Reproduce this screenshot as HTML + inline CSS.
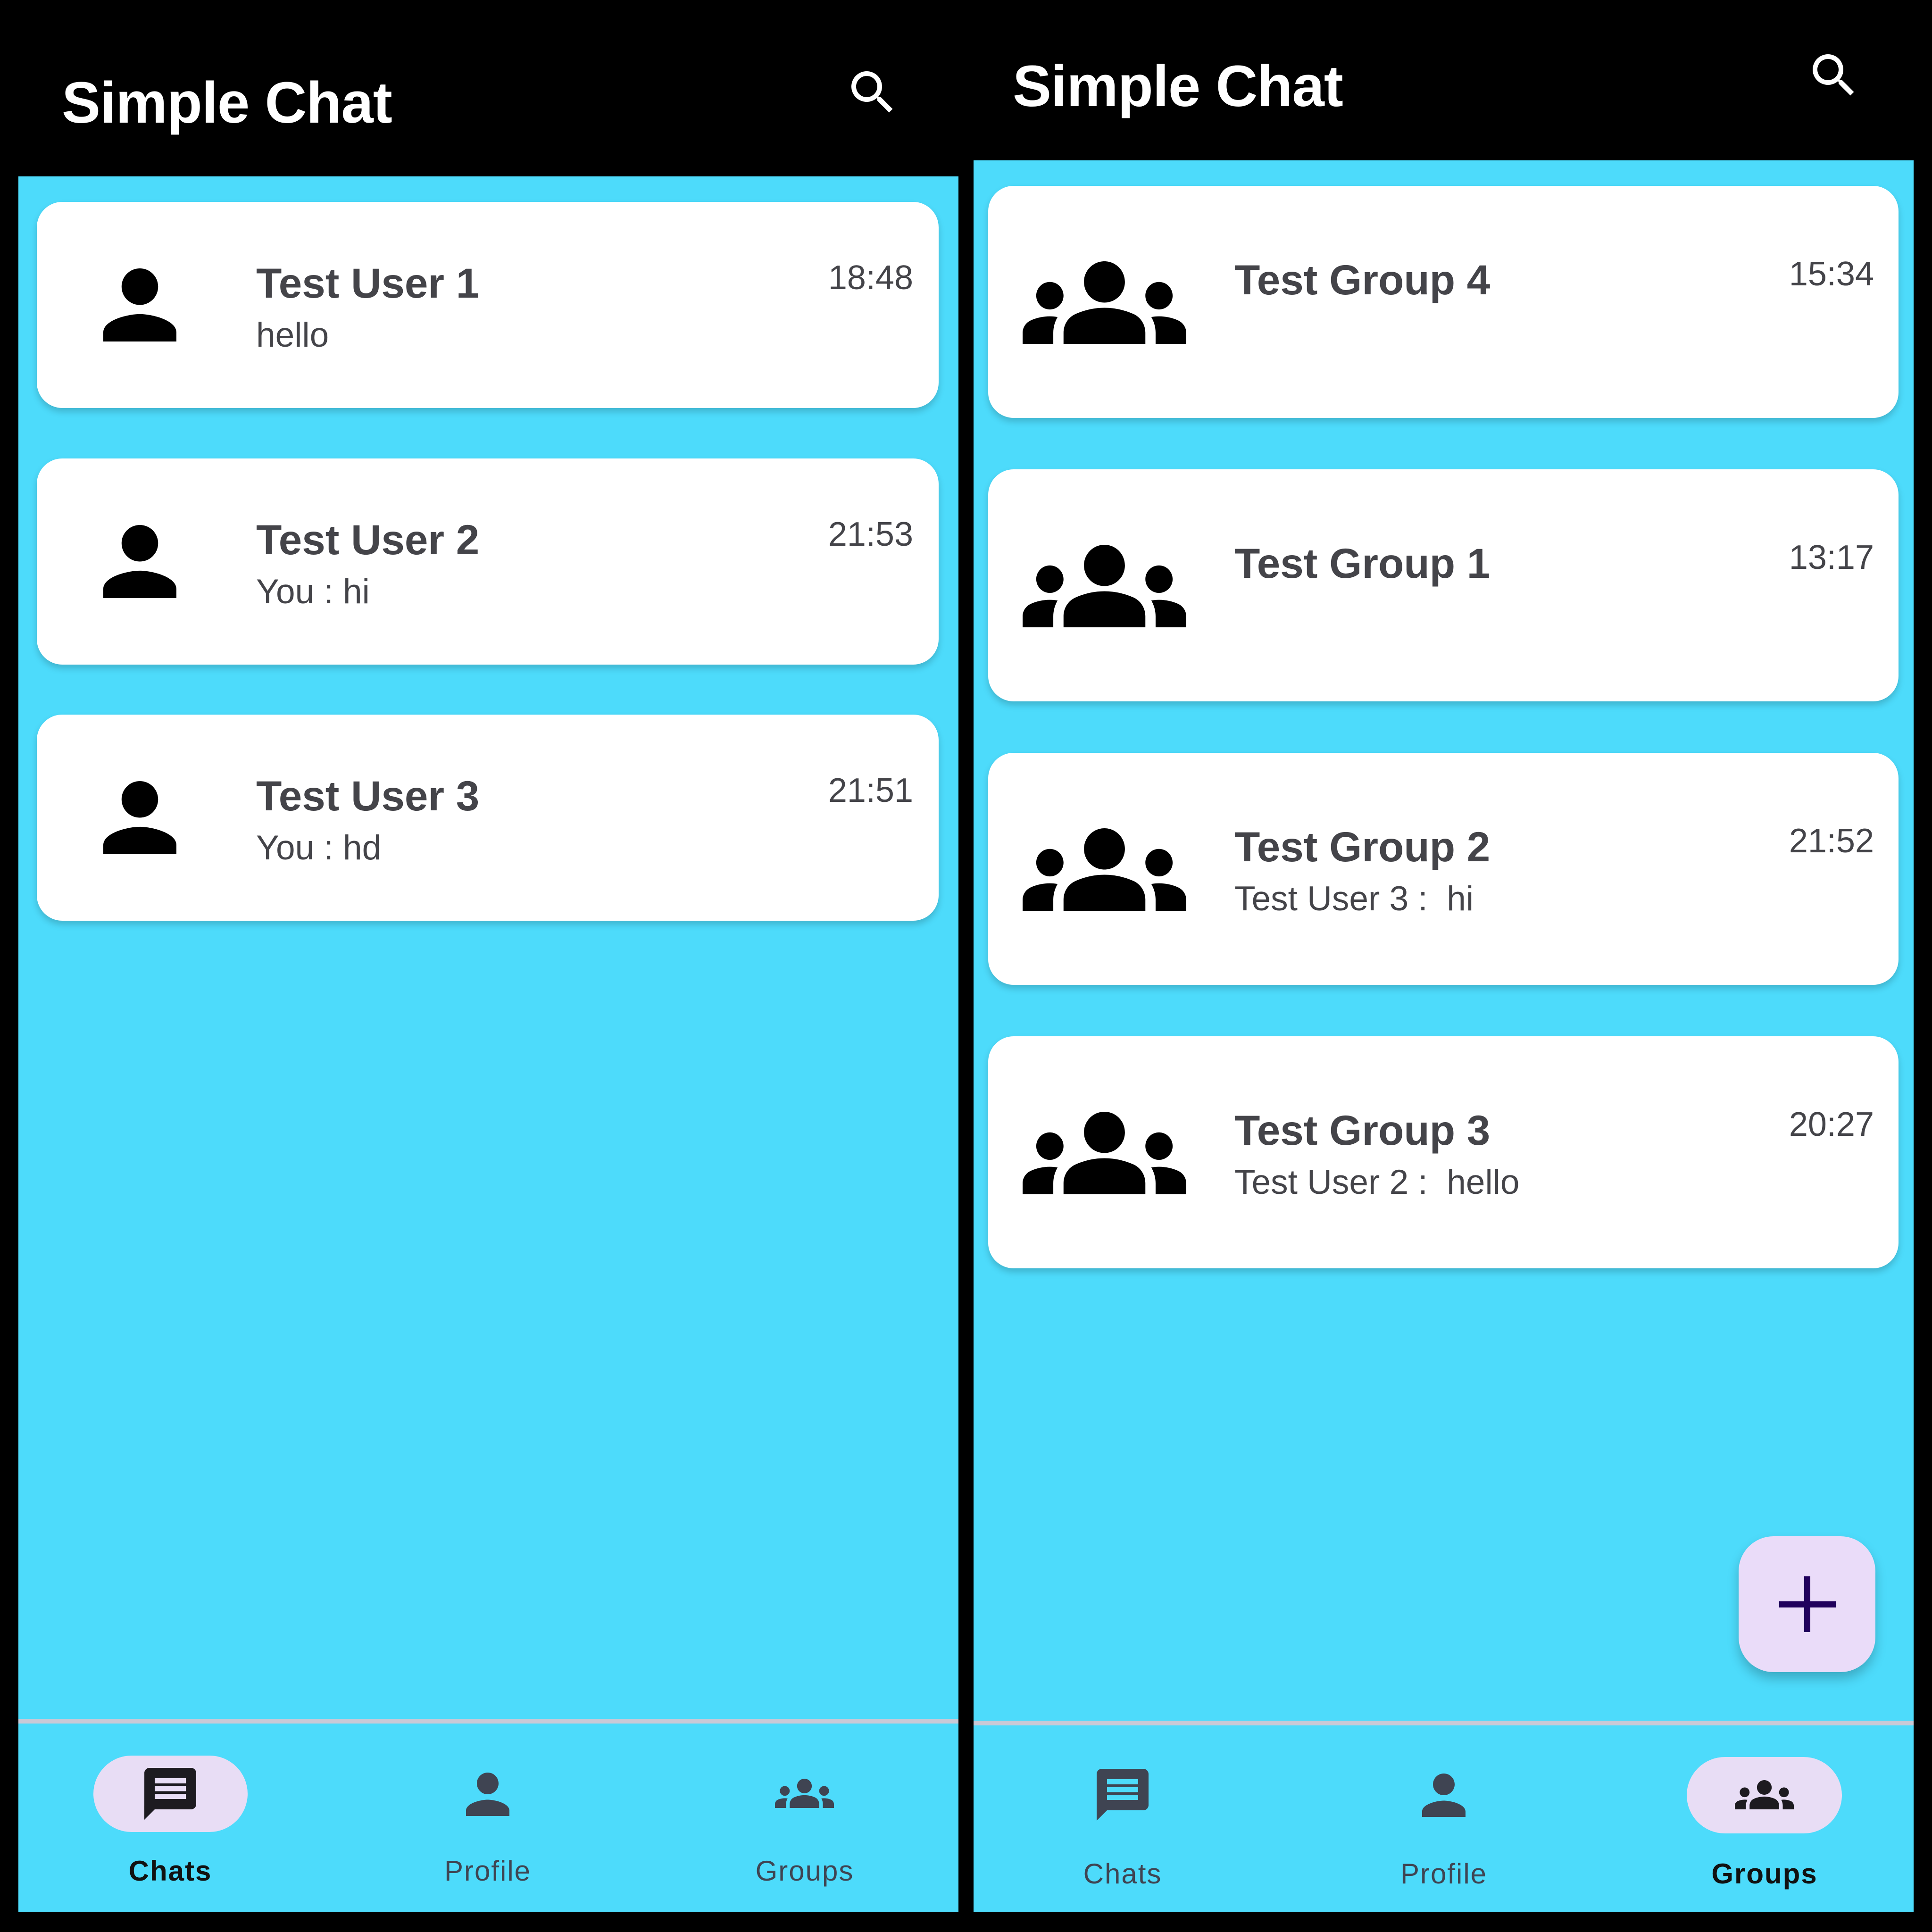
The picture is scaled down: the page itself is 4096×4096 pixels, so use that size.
<!DOCTYPE html>
<html><head><meta charset="utf-8"><style>
*{margin:0;padding:0;box-sizing:border-box}
body{width:4096px;height:4096px;background:#000;position:relative;overflow:hidden;font-family:"Liberation Sans",Roboto,sans-serif}
.a{position:absolute}
.panel{position:absolute;background:#4ddbfb}
.card{position:absolute;background:#fff;border-radius:54px;box-shadow:0 8px 14px rgba(0,0,0,.18)}
.title{position:absolute;color:#fff;font-weight:bold;font-size:123px;letter-spacing:-1px;white-space:nowrap}
.name{position:absolute;color:#444449;font-weight:bold;font-size:89px;white-space:nowrap}
.sub{position:absolute;color:#444449;font-size:73px;white-space:nowrap}
.time{position:absolute;color:#444449;font-size:72px;white-space:nowrap;text-align:right}
.lbl{position:absolute;font-size:60px;font-weight:bold;color:#3f4452;transform:translateX(-50%);letter-spacing:2px;white-space:nowrap}
.pill{position:absolute;background:#e8ddf5;border-radius:90px}
.div{position:absolute;height:10px;background:#c9c9d6}
</style></head><body>
<svg width="0" height="0" style="position:absolute"><defs>
<path id="grp" d="M12 12.75c1.63 0 3.07.39 4.24.9 1.08.48 1.76 1.56 1.760 2.73V18H6v-1.61c0-1.18.68-2.26 1.76-2.73 1.17-.52 2.61-.91 4.24-.91zM4 13c1.1 0 2-.9 2-2s-.9-2-2-2-2 .9-2 2 .9 2 2 2zm1.13 1.1c-.37-.06-.74-.1-1.13-.1-.99 0-1.93.21-2.78.58C.48 14.9 0 15.62 0 16.43V18h4.5v-1.61c0-.83.23-1.61.63-2.29zM20 13c1.1 0 2-.9 2-2s-.9-2-2-2-2 .9-2 2 .9 2 2 2zm4 3.43c0-.81-.48-1.53-1.22-1.85-.85-.37-1.79-.58-2.78-.58-.39 0-.76.04-1.13.1.4.68.63 1.46.63 2.29V18H24v-1.57zM12 6c1.66 0 3 1.34 3 3s-1.34 3-3 3-3-1.34-3-3 1.34-3 3-3z"/>
<path id="per" d="M12 12c2.21 0 4-1.79 4-4s-1.79-4-4-4-4 1.79-4 4 1.79 4 4 4zm0 2c-2.67 0-8 1.34-8 4v2h16v-2c0-2.66-5.33-4-8-4z"/>
<path id="cht" fill-rule="evenodd" d="M20 2H4c-1.1 0-1.99.9-1.99 2L2 22l4-4h14c1.1 0 2-.9 2-2V4c0-1.1-.9-2-2-2zM18 14H6v-2h12v2zM18 11H6V9h12v2zM18 8H6V6h12v2z"/>
<path id="srch" d="M15.5 14h-.79l-.28-.27A6.47 6.47 0 0 0 16 9.5 6.5 6.5 0 1 0 9.5 16c1.61 0 3.09-.59 4.23-1.57l.27.28v.79l5 4.99L20.49 19l-4.99-5zm-6 0C7.01 14 5 11.990 5 9.5S7.01 5 9.5 5 14 7.01 14 9.5 11.99 14 9.5 14z"/>
</defs></svg>

<!-- LEFT -->
<div class="title" style="left:131px;top:148px">Simple Chat</div>
<svg class="a" style="left:1790px;top:136px" width="120" height="120" viewBox="0 0 24 24"><use href="#srch" fill="#fff"/></svg>
<div class="panel" style="left:39px;top:374px;width:1993px;height:3680px"></div>

<div class="card" style="left:78px;top:428px;width:1912px;height:437px"></div>
<svg class="a" style="left:219px;top:569px" width="155" height="155" viewBox="4 4 16 16" preserveAspectRatio="none"><use href="#per"/></svg>
<div class="name" style="left:543px;top:549px">Test User 1</div>
<div class="sub" style="left:543px;top:669px">hello</div>
<div class="time" style="right:2160px;top:548px">18:48</div>

<div class="card" style="left:78px;top:972px;width:1912px;height:437px"></div>
<svg class="a" style="left:219px;top:1113px" width="155" height="155" viewBox="4 4 16 16" preserveAspectRatio="none"><use href="#per"/></svg>
<div class="name" style="left:543px;top:1093px">Test User 2</div>
<div class="sub" style="left:543px;top:1213px">You : hi</div>
<div class="time" style="right:2160px;top:1092px">21:53</div>

<div class="card" style="left:78px;top:1515px;width:1912px;height:437px"></div>
<svg class="a" style="left:219px;top:1656px" width="155" height="155" viewBox="4 4 16 16" preserveAspectRatio="none"><use href="#per"/></svg>
<div class="name" style="left:543px;top:1636px">Test User 3</div>
<div class="sub" style="left:543px;top:1756px">You : hd</div>
<div class="time" style="right:2160px;top:1635px">21:51</div>

<div class="div" style="left:39px;top:3644px;width:1993px"></div>
<div class="pill" style="left:198px;top:3722px;width:327px;height:162px"></div>
<svg class="a" style="left:306px;top:3748px" width="110" height="110" viewBox="2 2 20 20"><use href="#cht" fill="#1d1b20"/></svg>
<svg class="a" style="left:988px;top:3758px" width="92" height="92" viewBox="4 4 16 16" preserveAspectRatio="none"><use href="#per" fill="#3f4452"/></svg>
<svg class="a" style="left:1643px;top:3771px" width="125" height="62" viewBox="0 6 24 12" preserveAspectRatio="none"><use href="#grp" fill="#3f4452"/></svg>
<div class="lbl" style="left:361px;top:3932px;color:#111">Chats</div>
<div class="lbl" style="left:1034px;top:3932px;font-weight:normal">Profile</div>
<div class="lbl" style="left:1706px;top:3932px;font-weight:normal">Groups</div>

<!-- RIGHT -->
<div class="title" style="left:2147px;top:113px">Simple Chat</div>
<svg class="a" style="left:3828px;top:100px" width="120" height="120" viewBox="0 0 24 24"><use href="#srch" fill="#fff"/></svg>
<div class="panel" style="left:2064px;top:340px;width:1993px;height:3714px"></div>

<div class="card" style="left:2095px;top:394px;width:1930px;height:492px"></div>
<svg class="a" style="left:2168px;top:554px" width="347" height="175" viewBox="0 6 24 12" preserveAspectRatio="none"><use href="#grp"/></svg>
<div class="name" style="left:2617px;top:542px">Test Group 4</div>
<div class="time" style="right:123px;top:540px">15:34</div>

<div class="card" style="left:2095px;top:995px;width:1930px;height:492px"></div>
<svg class="a" style="left:2168px;top:1155px" width="347" height="175" viewBox="0 6 24 12" preserveAspectRatio="none"><use href="#grp"/></svg>
<div class="name" style="left:2617px;top:1143px">Test Group 1</div>
<div class="time" style="right:123px;top:1141px">13:17</div>

<div class="card" style="left:2095px;top:1596px;width:1930px;height:492px"></div>
<svg class="a" style="left:2168px;top:1756px" width="347" height="175" viewBox="0 6 24 12" preserveAspectRatio="none"><use href="#grp"/></svg>
<div class="name" style="left:2617px;top:1744px">Test Group 2</div>
<div class="sub" style="left:2617px;top:1864px">Test User 3 :&nbsp;&nbsp;hi</div>
<div class="time" style="right:123px;top:1742px">21:52</div>

<div class="card" style="left:2095px;top:2197px;width:1930px;height:492px"></div>
<svg class="a" style="left:2168px;top:2357px" width="347" height="175" viewBox="0 6 24 12" preserveAspectRatio="none"><use href="#grp"/></svg>
<div class="name" style="left:2617px;top:2345px">Test Group 3</div>
<div class="sub" style="left:2617px;top:2465px">Test User 2 :&nbsp;&nbsp;hello</div>
<div class="time" style="right:123px;top:2343px">20:27</div>

<div class="a" style="left:3686px;top:3257px;width:290px;height:288px;background:#eadcf9;border-radius:74px;box-shadow:0 14px 24px rgba(0,0,0,.22)"></div>
<div class="a" style="left:3825px;top:3342px;width:13px;height:118px;background:#21005d"></div>
<div class="a" style="left:3772px;top:3395px;width:120px;height:13px;background:#21005d"></div>

<div class="div" style="left:2064px;top:3648px;width:1993px"></div>
<div class="pill" style="left:3576px;top:3725px;width:329px;height:162px"></div>
<svg class="a" style="left:2325px;top:3750px" width="110" height="110" viewBox="2 2 20 20"><use href="#cht" fill="#3f4452"/></svg>
<svg class="a" style="left:3015px;top:3760px" width="92" height="92" viewBox="4 4 16 16" preserveAspectRatio="none"><use href="#per" fill="#3f4452"/></svg>
<svg class="a" style="left:3678px;top:3774px" width="125" height="62" viewBox="0 6 24 12" preserveAspectRatio="none"><use href="#grp" fill="#1d1b20"/></svg>
<div class="lbl" style="left:2380px;top:3938px;font-weight:normal">Chats</div>
<div class="lbl" style="left:3061px;top:3938px;font-weight:normal">Profile</div>
<div class="lbl" style="left:3741px;top:3938px;color:#111">Groups</div>
</body></html>
